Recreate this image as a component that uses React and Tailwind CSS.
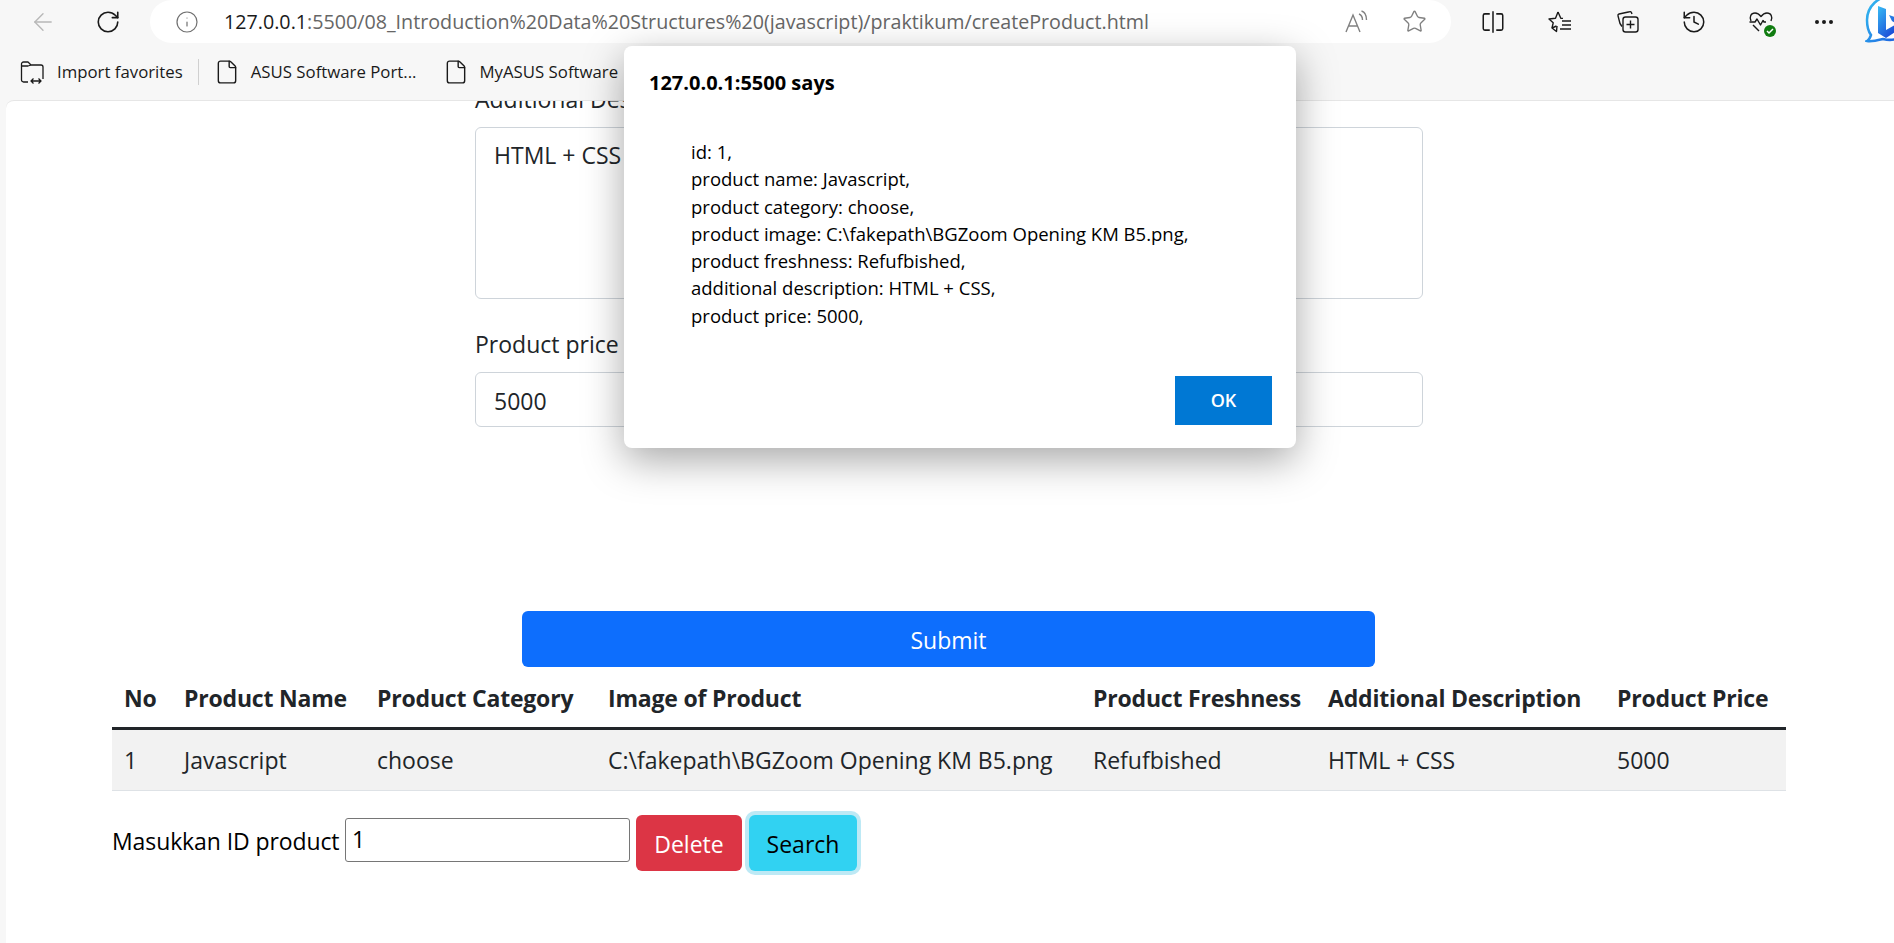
import { ArrowLeft, RotateCw, Info, Star, History, MoreHorizontal, File } from 'lucide-react'

const alertLines = [
    'id: 1,',
    'product name: Javascript,',
    'product category: choose,',
    'product image: C:\\fakepath\\BGZoom Opening KM B5.png,',
    'product freshness: Refufbished,',
    'additional description: HTML + CSS,',
    'product price: 5000,',
]

const columns = [
    { label: 'No', value: '1', width: 'w-[60px]' },
    { label: 'Product Name', value: 'Javascript', width: 'w-[193px]' },
    { label: 'Product Category', value: 'choose', width: 'w-[231px]' },
    { label: 'Image of Product', value: 'C:\\fakepath\\BGZoom Opening KM B5.png', width: 'w-[485px]' },
    { label: 'Product Freshness', value: 'Refufbished', width: 'w-[235px]' },
    { label: 'Additional Description', value: 'HTML + CSS', width: 'w-[289px]' },
    { label: 'Product Price', value: '5000', width: 'w-[181px]' },
]

function SplitIcon() {
    return (
        <svg width="26" height="26" viewBox="0 0 24 24" fill="none" stroke="#1a1a1a" strokeWidth="1.4">
            <path d="M9 4.500H4.500a1.500 1.500 0 0 0-1.500 1.500v12a1.500 1.500 0 0 0 1.500 1.500H9" />
            <path d="M15 4.500h4.500a1.500 1.500 0 0 1 1.500 1.500v12a1.500 1.500 0 0 1-1.500 1.500H15" />
            <path d="M12 2v20" />
        </svg>
    )
}

function FavoritesIcon() {
    return (
        <svg width="26" height="26" viewBox="0 0 26 26" fill="none" stroke="#1a1a1a" strokeWidth="1.4" strokeLinejoin="round">
            <path d="M11 3l2.800 6.200 2.200.2M10 17l-.5 5.500-4.500-3.500 1.200-5.200L2 10l6.500-.8L11 3" />
            <path d="M5 19l4.500-2" />
            <path d="M15 12h9M15 16h9M13 20h11" />
        </svg>
    )
}

function CollectionsIcon() {
    return (
        <svg width="26" height="26" viewBox="0 0 26 26" fill="none" stroke="#1a1a1a" strokeWidth="1.4" strokeLinejoin="round">
            <path d="M18 5l-.6-1.500a1.500 1.500 0 0 0-1.800-.8L5 5a1.500 1.500 0 0 0-1 1.800L6 14.500l2 3" />
            <rect x="9" y="8" width="15" height="15" rx="2.500" />
            <path d="M16.500 11.500v8M12.500 15.500h8" />
        </svg>
    )
}

function HeartIcon() {
    return (
        <span className="relative flex h-[26px] w-[26px]">
            <svg width="26" height="26" viewBox="0 0 26 26" fill="none" stroke="#1a1a1a" strokeWidth="1.4" strokeLinejoin="round">
                <path d="M3 12C1 8 3 4 7 4c3 0 4.500 1.500 6 3.500C14.500 5.500 16 4 19 4c4 0 6 4 4 8" />
                <path d="M1.500 13H7l2-3 3.500 6 2.500-4.500 1 1.500h2" />
                <path d="M5 16l6 6" />
            </svg>
            <span className="absolute right-[-2px] bottom-[-2px] flex h-[12px] w-[12px] items-center justify-center rounded-full bg-[#107c10]">
                <svg width="8" height="8" viewBox="0 0 8 8" fill="none" stroke="#fff" strokeWidth="1.500">
                    <path d="M1 4l2 2 4-4" />
                </svg>
            </span>
        </span>
    )
}

function BingIcon() {
    return (
        <svg width="29" height="44" viewBox="0 0 29 44" fill="none">
            <defs>
                <linearGradient id="bubble" x1="0" y1="0" x2="1" y2="1">
                    <stop offset="0" stopColor="#35c1f1" />
                    <stop offset="1" stopColor="#1b5fe0" />
                </linearGradient>
                <linearGradient id="bing-b" x1="0" y1="0" x2="0.6" y2="1">
                    <stop offset="0" stopColor="#37bdf5" />
                    <stop offset="1" stopColor="#1d4fd8" />
                </linearGradient>
            </defs>
            <path d="M32-4C12-6 2 8 2 20c0 6 1 11 4 15-1 3-2 5-4 6 5 1 12-1 16-2 4 1 10 1 14 0z" fill="#fff" stroke="url(#bubble)" strokeWidth="2.500" />
            <path d="M13 6l8 3v21l9-5v7l-9 6-8-5zM24 15l6 2v6l-3-2z" fill="url(#bing-b)" />
        </svg>
    )
}

function ReadAloudIcon() {
    return (
        <svg width="26" height="24" viewBox="0 0 26 24" fill="none" stroke="#808080" strokeWidth="1.400">
            <path d="M2 22L9 5l7 17M4.700 16h8.600" />
            <path d="M15 4c2.500 1 3.500 3 3.500 6M17.500 1c3.500 1 5 4.500 5 9" />
        </svg>
    )
}

function ImportIcon() {
    return (
        <svg width="26" height="26" viewBox="0 0 26 26" fill="none" stroke="#1a1a1a" strokeWidth="1.300" strokeLinejoin="round">
            <path d="M9 23H4.500A2 2 0 0 1 2.500 21V5a2 2 0 0 1 2-2H9l3 3h10a2 2 0 0 1 2 2v12" />
            <path d="M2.500 7H9l3-1" />
            <path d="M12 22h10M14.500 19.500L12 22l2.500 2.500M19.500 19.500L22 22l-2.500 2.500" />
        </svg>
    )
}

export default function App() {
    return (
        <div className="relative h-[943px] overflow-hidden bg-[#f7f7f7] font-['Open_Sans',sans-serif] text-[#212529]">
            <div className="flex h-[43px] items-center">
                <div className="flex w-[150px] items-center pl-[29px]">
                    <ArrowLeft className="h-[28px] w-[28px] text-[#b8b8b8]" strokeWidth={1.2} />
                    <RotateCw className="ml-[38px] h-[26px] w-[26px] text-[#1a1a1a]" strokeWidth={1.5} />
                </div>
                <div className="flex h-[43px] w-[1301px] items-center rounded-[22px] bg-white pl-[25px] pr-[24px]">
                    <Info className="h-[24px] w-[24px] text-[#707070]" strokeWidth={1.2} />
                    <span className="ml-[25px] whitespace-nowrap text-[19.700px] text-[#666]">
                        <span className="text-[#1a1a1a]">127.0.0.1</span>
                        :5500/08_Introduction%20Data%20Structures%20(javascript)/praktikum/createProduct.html
                    </span>
                    <div className="ml-auto flex items-center gap-[32px]">
                        <ReadAloudIcon />
                        <Star className="h-[25px] w-[25px] text-[#808080]" strokeWidth={1.3} />
                    </div>
                </div>
                <div className="ml-[29px] flex items-center gap-[41px]">
                    <SplitIcon />
                    <FavoritesIcon />
                    <CollectionsIcon />
                    <History className="h-[26px] w-[26px] text-[#1a1a1a]" strokeWidth={1.4} />
                    <HeartIcon />
                    <MoreHorizontal className="-ml-[3px] h-[24px] w-[24px] text-[#1a1a1a]" strokeWidth={2} />
                </div>
                <div className="ml-auto self-start">
                    <BingIcon />
                </div>
            </div>

            <div className="flex h-[57px] items-center pl-[19px] text-[16.800px] text-[#1a1a1a]">
                <ImportIcon />
                <span className="ml-[12px]">Import favorites</span>
                <span className="ml-[15px] h-[26px] w-px bg-[#d0d0d0]" />
                <File className="ml-[15px] h-[26px] w-[26px]" strokeWidth={1.3} />
                <span className="ml-[11px]">ASUS Software Port...</span>
                <File className="ml-[26px] h-[26px] w-[26px]" strokeWidth={1.3} />
                <span className="ml-[11px]">MyASUS Software</span>
            </div>

            <div className="ml-[6px] h-[843px] overflow-hidden rounded-tl-lg border-t border-[#e6e6e6] bg-white pr-[2px] text-[23px]">
                <div className="mx-auto -mt-[17px] w-[948px]">
                    <div className="h-[30px] leading-[30px]">Additional Description</div>
                    <div className="mt-[13px] h-[172px] rounded-md border border-[#ced4da] px-[18px] py-[12px] leading-[30px]">HTML + CSS</div>
                    <div className="mt-[30px] h-[30px] leading-[30px]">Product price</div>
                    <div className="mt-[13px] flex h-[55px] items-center rounded-md border border-[#ced4da] px-[18px] pt-[3px]">5000</div>
                </div>

                <button className="ml-[516px] mt-[184px] block h-[56px] w-[853px] rounded-md bg-[#0d6efd] pt-[2px] text-white">Submit</button>

                <div className="mx-auto w-[1674px]">
                    <div className="flex h-[63px] items-center border-b-[3px] border-[#212529] pt-[2px] font-bold tracking-[-0.2px]">
                        {columns.map(col => (
                            <div key={col.label} className={`${col.width} whitespace-nowrap pl-[12px]`}>{col.label}</div>
                        ))}
                    </div>
                    <div className="flex h-[61px] items-center border-b border-[#dee2e6] bg-[#f2f2f2]">
                        {columns.map(col => (
                            <div key={col.label} className={`${col.width} whitespace-nowrap pl-[12px]`}>{col.value}</div>
                        ))}
                    </div>

                    <div className="mt-[24px] flex h-[56px] items-center">
                        <span className="mb-[3px] w-[226px] whitespace-nowrap tracking-[-0.1px] text-black">Masukkan ID product</span>
                        <div className="mb-[7px] ml-[7px] flex h-[44px] w-[285px] items-center rounded-[3px] border border-[#767676] px-[6px] text-black">1</div>
                        <button className="ml-[6px] h-[56px] w-[106px] rounded-md bg-[#dc3545] pt-[2px] text-white">Delete</button>
                        <button className="ml-[7px] h-[56px] w-[108px] rounded-md bg-[#31d2f2] pt-[2px] text-black ring-4 ring-[#bde9f5]">Search</button>
                    </div>
                </div>
            </div>

            <div className="absolute top-[46px] left-[624px] h-[402px] w-[672px] rounded-lg bg-white pl-[25px] pr-[24px] text-black shadow-[0_12px_40px_rgba(0,0,0,0.35)]">
                <div className="pt-[24px] text-[20px] font-bold leading-[26px]">127.0.0.1:5500 says</div>
                <div className="mt-[42px] pl-[42px] text-[18.500px] leading-[27.300px]">
                    {alertLines.map(line => (
                        <div key={line}>{line}</div>
                    ))}
                </div>
                <div className="mt-[47px] flex justify-end">
                    <button className="h-[49px] w-[97px] bg-[#0078d4] text-[18px] font-semibold text-white">OK</button>
                </div>
            </div>
        </div>
    )
}
